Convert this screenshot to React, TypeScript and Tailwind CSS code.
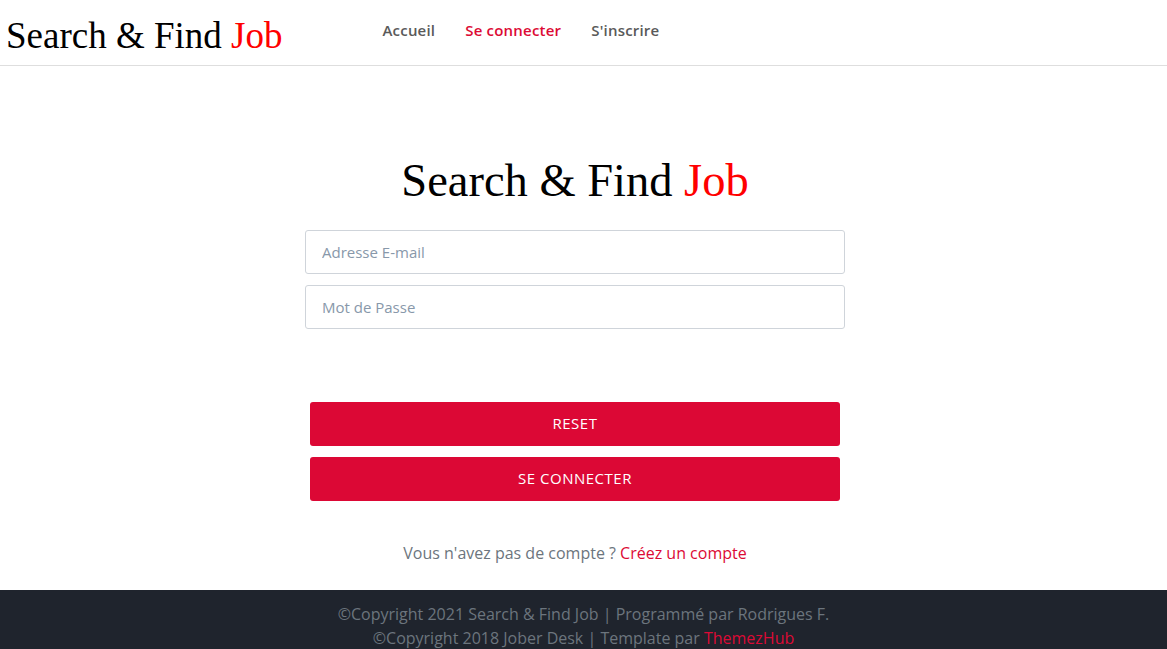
const navLinks = [
  { label: "Accueil", active: false },
  { label: "Se connecter", active: true },
  { label: "S'inscrire", active: false },
];

function Logo({ className }: { className: string }) {
  return (
    <span className={className} style={{ fontFamily: '"Liberation Serif", serif' }}>
      Search &amp; Find <span className="text-[#ff0000]">Job</span>
    </span>
  );
}

export default function App() {
  return (
    <div className="min-h-screen bg-white font-['Open_Sans',sans-serif] flex flex-col">
      {/* Barre de navigation */}
      <header className="h-[66px] border-b border-[#dedede] flex items-center">
        <Logo className="ml-[6px] text-[37px] leading-none text-black mt-[6px]" />
        <nav className="ml-[100px] flex gap-[30px] mt-[-4px]">
          {navLinks.map((link) => (
            <a
              key={link.label}
              href="#"
              className={`text-[15px] font-semibold tracking-[0.2px] ${link.active ? "text-[#dc0a35]" : "text-[#5a5a5a]"}`}
            >
              {link.label}
            </a>
          ))}
        </nav>
      </header>

      <main className="flex-1 flex flex-col items-center pt-[92px] pr-[17px]">
        <h1>
          <Logo className="block text-[46.5px] leading-none text-black" />
        </h1>
        <form className="mt-[25px] w-[540px] flex flex-col gap-[11px]">
          <input
            type="email"
            placeholder="Adresse E-mail"
            className="h-[44px] w-full border border-[#cfd4da] rounded-[3px] px-4 text-[15px] placeholder:text-[#8898aa] outline-none"
          />
          <input
            type="password"
            placeholder="Mot de Passe"
            className="h-[44px] w-full border border-[#cfd4da] rounded-[3px] px-4 text-[15px] placeholder:text-[#8898aa] outline-none"
          />
          <div className="mt-[62px] px-[5px] flex flex-col gap-[11px]">
            <button type="reset" className="h-[44px] w-full bg-[#dc0835] rounded-[3px] text-white text-[15px] tracking-[0.5px] uppercase">
              Reset
            </button>
            <button type="submit" className="h-[44px] w-full bg-[#dc0835] rounded-[3px] text-white text-[15px] tracking-[0.5px] uppercase">
              Se connecter
            </button>
          </div>
        </form>
        <p className="mt-[40px] text-[16px] text-[#6c757d]">
          Vous n'avez pas de compte ? <a href="#" className="text-[#dc0a35]">Créez un compte</a>
        </p>
      </main>

      <footer className="mt-[25px] bg-[#1f242d] pt-[12px] text-center text-[16px] leading-[24px] text-[#6c757d]">
        <p>©Copyright 2021 Search &amp; Find Job | Programmé par Rodrigues F.</p>
        <p>
          ©Copyright 2018 Jober Desk | Template par <a href="#" className="text-[#dc0a35]">ThemezHub</a>
        </p>
      </footer>
    </div>
  );
}
